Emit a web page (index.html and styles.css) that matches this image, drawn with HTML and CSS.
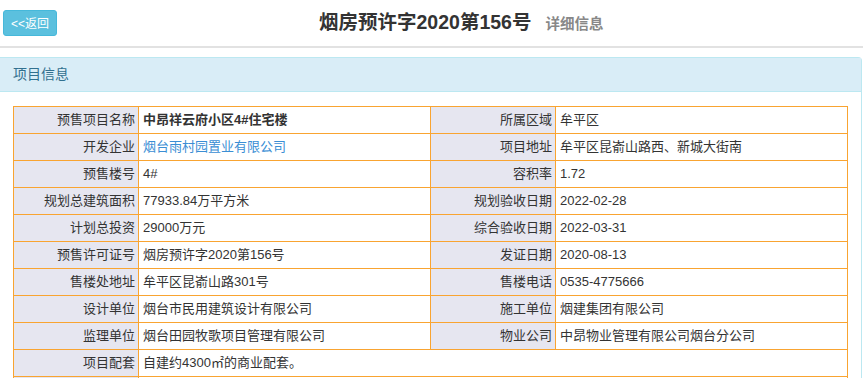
FILE: index.html
```html
<!DOCTYPE html>
<html lang="zh-CN">
<head>
<meta charset="utf-8">
<title>烟房预许字2020第156号</title>
<link rel="stylesheet" href="styles.css">
</head>
<body>
<div class="top">
  <a class="back" href="#">&lt;&lt;返回</a>
  <h1 class="title">烟房预许字2020第156号<small>详细信息</small></h1>
</div>
<hr class="rule">
<div class="panel">
  <div class="panel-heading">项目信息</div>
  <div class="panel-body">
    <table class="info">
      <colgroup><col class="c-label"><col class="c-value"><col class="c-label"><col class="c-value"></colgroup>
      <tr><th>预售项目名称</th><td class="strong">中昂祥云府小区4#住宅楼</td><th>所属区域</th><td>牟平区</td></tr>
      <tr><th>开发企业</th><td><a href="#" class="link">烟台雨村园置业有限公司</a></td><th>项目地址</th><td>牟平区昆嵛山路西、新城大街南</td></tr>
      <tr><th>预售楼号</th><td>4#</td><th>容积率</th><td>1.72</td></tr>
      <tr><th>规划总建筑面积</th><td>77933.84万平方米</td><th>规划验收日期</th><td>2022-02-28</td></tr>
      <tr><th>计划总投资</th><td>29000万元</td><th>综合验收日期</th><td>2022-03-31</td></tr>
      <tr><th>预售许可证号</th><td>烟房预许字2020第156号</td><th>发证日期</th><td>2020-08-13</td></tr>
      <tr><th>售楼处地址</th><td>牟平区昆嵛山路301号</td><th>售楼电话</th><td>0535-4775666</td></tr>
      <tr><th>设计单位</th><td>烟台市民用建筑设计有限公司</td><th>施工单位</th><td>烟建集团有限公司</td></tr>
      <tr><th>监理单位</th><td>烟台田园牧歌项目管理有限公司</td><th>物业公司</th><td>中昂物业管理有限公司烟台分公司</td></tr>
      <tr><th>项目配套</th><td colspan="3">自建约4300㎡的商业配套。</td></tr>
      <tr><th></th><td colspan="3"></td></tr>
    </table>
  </div>
</div>
</body>
</html>
```

FILE: styles.css
```css
html, body {
  margin: 0;
  padding: 0;
  background: #fff;
}
body {
  font-family: "Liberation Sans", "Noto Sans CJK SC", sans-serif;
  font-size: 13px;
  color: #333;
  width: 868px;
  overflow: hidden;
}
.top {
  display: flex;
  align-items: center;
  height: 46px;
  padding-left: 3px;
}
.back {
  display: block;
  width: 54px;
  height: 26px;
  margin-top: -1px;
  box-sizing: border-box;
  line-height: 26px;
  text-align: center;
  background: #5bc0de;
  border: 1px solid #46b8da;
  border-radius: 3px;
  color: #fff;
  font-size: 12px;
  text-decoration: none;
}
.title {
  margin: 0 0 0 262px;
  font-size: 19.5px;
  font-weight: bold;
  color: #333;
  line-height: 26px;
}
.title small {
  font-size: 14.5px;
  color: #888;
  margin-left: 14px;
  font-weight: bold;
}
.rule {
  margin: 0 5px 9px 0;
  border: 0;
  border-top: 2px solid #e2e2e2;
  height: 0;
}
.panel {
  width: 862px;
  box-sizing: border-box;
  border: 1px solid #bce8f1;
  border-left: 0;
  border-radius: 0 4px 0 0;
}
.panel-heading {
  background: #d9edf7;
  color: #31708f;
  border-bottom: 1px solid #bce8f1;
  height: 33px;
  line-height: 32px;
  padding-left: 13px;
  font-size: 14px;
}
.panel-body {
  padding: 14px 14px 0 13px;
}
.info {
  width: 835px;
  table-layout: fixed;
  border-collapse: collapse;
}
.c-label { width: 125px; }
.c-value { width: 292px; }
.info th, .info td {
  border: 1px solid #f9a431;
  height: 27px;
  box-sizing: border-box;
  padding: 0 5px;
  line-height: 18px;
  font-weight: normal;
  white-space: nowrap;
  overflow: hidden;
}
.info th {
  background: #e6e6f0;
  text-align: right;
  padding-right: 3px;
}
.info td {
  text-align: left;
  padding-left: 4px;
}
.info td.strong { font-weight: bold; }
.link {
  color: #3a8ed4;
  text-decoration: none;
}
```
